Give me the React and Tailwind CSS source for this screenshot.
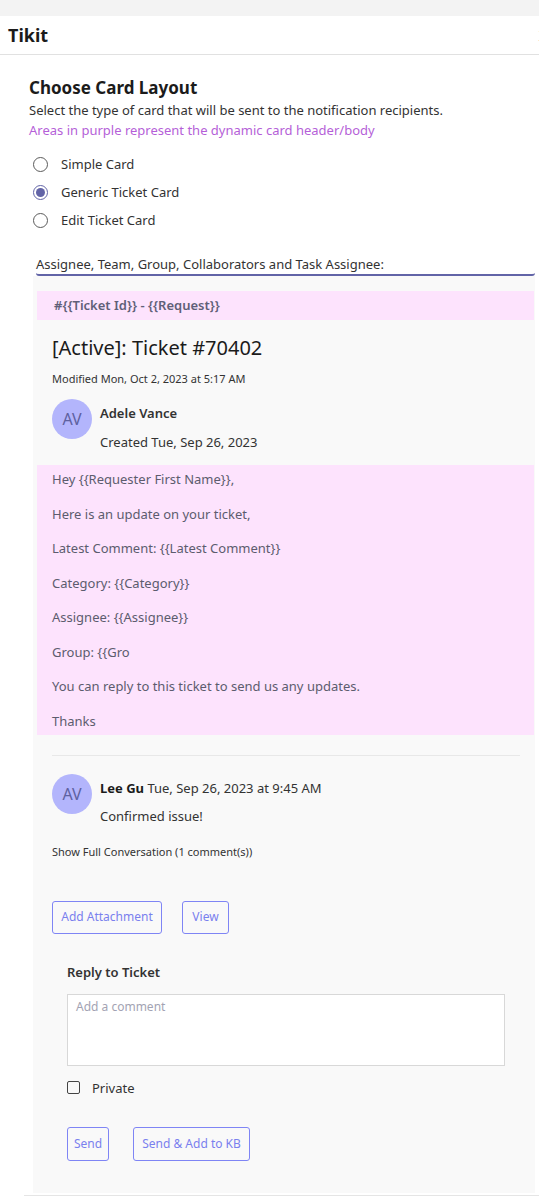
import React from "react";

const F = "font-['Noto_Sans','Open_Sans',sans-serif]";

function Radio({ checked, label }) {
  return (
    <div className="flex h-[28px] items-center">
      <div className="ml-[4px] flex h-[15px] w-[15px] items-center justify-center rounded-full border border-[#5b5b5b]" style={checked ? { borderColor: "#6264a7" } : undefined}>
        {checked && <div className="h-[9px] w-[9px] rounded-full bg-[#6264a7]" />}
      </div>
      <span className="ml-[13px] text-[13px] leading-[20px] text-[#333]">{label}</span>
    </div>
  );
}

function Avatar() {
  return (
    <div className="flex h-[40px] w-[40px] shrink-0 items-center justify-center rounded-full bg-[#b3b5fc] text-[16px] text-[#5e61a0]">
      AV
    </div>
  );
}

function OutlineBtn({ children, w }) {
  return (
    <div className={`flex h-[33px] items-center justify-center rounded-[3px] border border-[#7f85f5] text-[12px] text-[#7a80ee] ${w}`}>
      {children}
    </div>
  );
}

export default function App() {
  const body = [
    "Hey {{Requester First Name}},",
    "Here is an update on your ticket,",
    "Latest Comment: {{Latest Comment}}",
    "Category: {{Category}}",
    "Assignee: {{Assignee}}",
    "Group: {{Gro",
    "You can reply to this ticket to send us any updates.",
    "Thanks",
  ];
  return (
    <div className={`${F} min-h-[1200px] w-[539px] overflow-hidden bg-white text-[#242424]`}>
      <div className="h-[16px] bg-[#f3f3f3]" />
      <div className="flex h-[39px] items-center justify-between overflow-hidden border-b border-[#e1e1e1] pl-[8px]">
        <span className="text-[18px] font-bold leading-[24px] text-[#1b1b1b]">Tikit</span>
        <span className="-mr-[8px] text-[14px] text-[#333]">X</span>
      </div>

      <div className="pl-[29px]">
        <div className="mt-[22px] text-[17px] font-bold leading-[22px] text-[#1b1b1b]">Choose Card Layout</div>
        <div className="mt-[1px] text-[13px] leading-[20px] text-[#333]">
          Select the type of card that will be sent to the notification recipients.
        </div>
        <div className="text-[13px] leading-[20px] text-[#b55fd8]">
          Areas in purple represent the dynamic card header/body
        </div>
        <div className="mt-[10px]">
          <Radio label="Simple Card" />
          <Radio checked label="Generic Ticket Card" />
          <Radio label="Edit Ticket Card" />
        </div>
      </div>

      <div className="ml-[33px] mr-[4px] mt-[20px]">
        <div className="ml-[3px] rounded-b-[3px] border-b-2 border-[#6264a7] text-[13px] leading-[20px] text-[#333]">
          Assignee, Team, Group, Collaborators and Task Assignee:
        </div>
        <div className="bg-[#f9f9f9] pb-[32px] pl-[4px] pr-[1px] pt-[15px]">
          <div className="flex h-[29px] items-center bg-[#fde3fd] pl-[17px] text-[13px] font-semibold text-[#5f5f78]">
            {"#{{Ticket Id}} - {{Request}}"}
          </div>
          <div className="pl-[15px] pr-[14px]">
            <div className="mt-[14px] text-[20px] leading-[28px] text-[#1b1b1b]">[Active]: Ticket #70402</div>
            <div className="mt-[9px] text-[11px] leading-[16px] text-[#333]">Modified Mon, Oct 2, 2023 at 5:17 AM</div>
            <div className="mt-[12px] flex">
              <Avatar />
              <div className="ml-[8px] pt-[4px]">
                <div className="text-[13px] font-semibold leading-[20px] text-[#333]">Adele Vance</div>
                <div className="mt-[9px] text-[13px] leading-[20px] text-[#333]">Created Tue, Sep 26, 2023</div>
              </div>
            </div>
          </div>
          <div className="mt-[13px] flex flex-col gap-[14.57px] bg-[#fde3fd] pb-[4px] pl-[15px] pt-[4px]">
            {body.map((t) => (
              <div key={t} className="text-[13px] leading-[20px] text-[#5c5c6e]">{t}</div>
            ))}
          </div>
          <div className="pl-[15px] pr-[14px]">
            <div className="mt-[20px] h-px bg-[#e8e8e8]" />
            <div className="mt-[18px] flex">
              <Avatar />
              <div className="ml-[8px] pt-[4px]">
                <div className="text-[13px] leading-[20px] text-[#333]">
                  <span className="font-bold text-[#1b1b1b]">Lee Gu</span> Tue, Sep 26, 2023 at 9:45 AM
                </div>
                <div className="mt-[8px] text-[13px] leading-[20px] text-[#333]">Confirmed issue!</div>
              </div>
            </div>
            <div className="mt-[18px] text-[11px] leading-[16px] text-[#333]">Show Full Conversation (1 comment(s))</div>
            <div className="mt-[41px] flex gap-[20px]">
              <OutlineBtn w="w-[110px]">Add Attachment</OutlineBtn>
              <OutlineBtn w="w-[47px]">View</OutlineBtn>
            </div>
            <div className="pl-[15px]">
              <div className="mt-[28px] text-[13px] font-semibold leading-[20px] text-[#333]">Reply to Ticket</div>
              <div className="mt-[12px] h-[72px] w-[438px] border border-[#d8d8d8] bg-white px-[8px] pt-[4px] text-[12px] leading-[16px] text-[#a3a3b3]">
                Add a comment
              </div>
              <div className="mt-[12px] flex h-[20px] items-center">
                <div className="h-[13px] w-[13px] rounded-[2px] border border-[#444]" />
                <span className="ml-[12px] text-[13px] leading-[20px] text-[#333]">Private</span>
              </div>
              <div className="mt-[29px] flex gap-[24px]">
                <OutlineBtn w="w-[42px] h-[34px]">Send</OutlineBtn>
                <OutlineBtn w="w-[117px] h-[34px]">Send &amp; Add to KB</OutlineBtn>
              </div>
            </div>
          </div>
        </div>
      </div>
      <div className="ml-[24px] mt-[2px] h-px bg-[#e5e5e5]" />
    </div>
  );
}
